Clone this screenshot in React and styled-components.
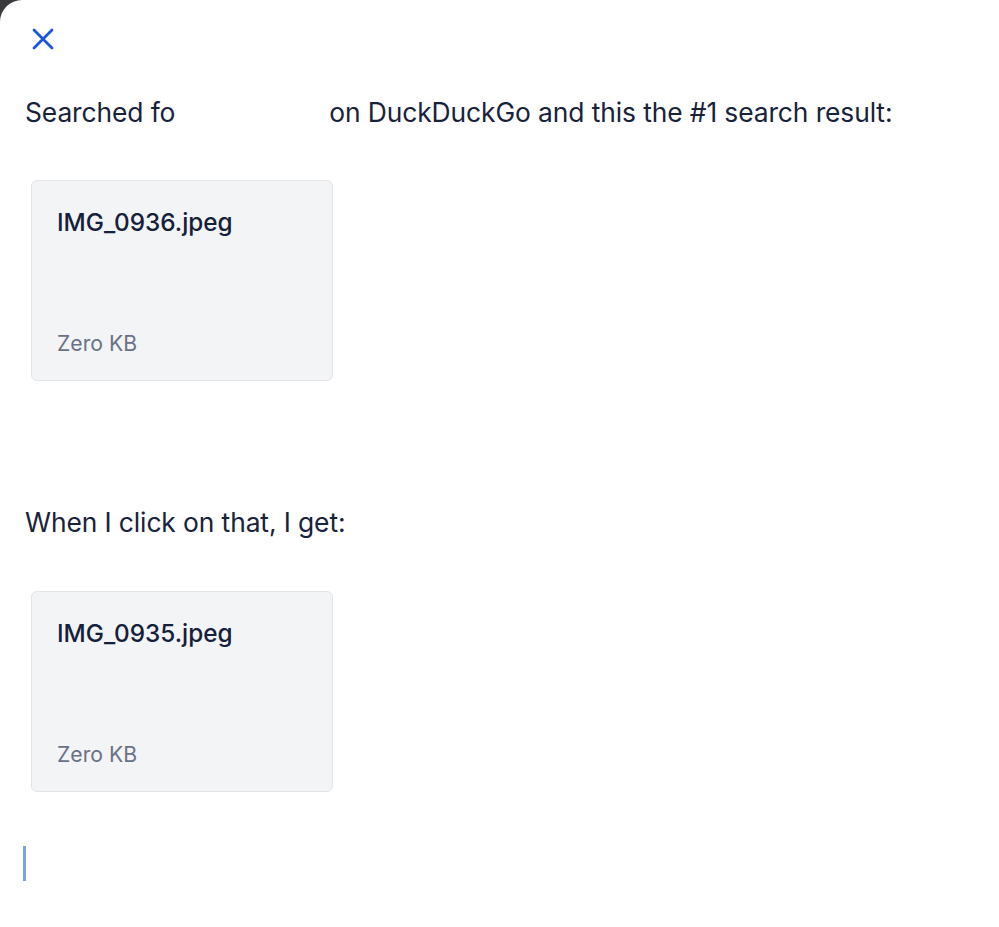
import React from 'react';
import styled, { createGlobalStyle } from 'styled-components';

const GlobalStyle = createGlobalStyle`
  html, body {
    margin: 0;
    padding: 0;
    background: #3a3a3c;
  }
  body {
    font-family: Inter, "Noto Sans", sans-serif;
    -webkit-font-smoothing: antialiased;
  }
`;

const Sheet = styled.div`
  background: #ffffff;
  border-top-left-radius: 22px;
  min-height: 927px;
  box-sizing: border-box;
  padding: 26px 25px 0 25px;
  display: flex;
  flex-direction: column;
  align-items: flex-start;
`;

const CloseButton = styled.button`
  border: none;
  background: none;
  padding: 0;
  margin: 0 0 0 6px;
  width: 24px;
  height: 26px;
  display: flex;
  align-items: center;
  justify-content: center;
  color: #1a56db;
  cursor: pointer;
`;

const Paragraph = styled.p`
  margin: ${p => p.$top}px 0 0 0;
  font-size: 26.4px;
  line-height: 34px;
  color: #18223a;
  letter-spacing: -0.1px;
  white-space: nowrap;
`;

const Redacted = styled.span`
  display: inline-block;
  width: ${p => p.$w}px;
`;

const FileCard = styled.div`
  margin: ${p => p.$top}px 0 0 6px;
  width: 302px;
  height: 201px;
  box-sizing: border-box;
  background: #f3f4f6;
  border: 1px solid #e2e4e8;
  border-radius: 6px;
  padding: 25px 25px 24px 25px;
  display: flex;
  flex-direction: column;
  justify-content: space-between;
`;

const FileName = styled.div`
  font-size: 24.3px;
  font-weight: 500;
  line-height: 32px;
  color: #15203a;
`;

const FileSize = styled.div`
  font-size: 21.2px;
  line-height: 26px;
  color: #687186;
`;

const Caret = styled.div`
  margin: 54px 0 0 -2px;
  width: 2.5px;
  height: 35px;
  background: #7ea2dc;
`;

function CloseIcon() {
  return (
    <svg width="22" height="22" viewBox="0 0 22 22" fill="none">
      <path d="M2 2L20 20M20 2L2 20" stroke="currentColor" strokeWidth="2.8" strokeLinecap="round" />
    </svg>
  );
}

function Attachment({ name, size, top }) {
  return (
    <FileCard $top={top}>
      <FileName>{name}</FileName>
      <FileSize>{size}</FileSize>
    </FileCard>
  );
}

export default function App() {
  return (
    <>
      <GlobalStyle />
      <Sheet>
        <CloseButton aria-label="Close">
          <CloseIcon />
        </CloseButton>
        <Paragraph $top={43}>
          Searched fo<Redacted $w={154} />on DuckDuckGo and this the #1 search result:
        </Paragraph>
        <Attachment name="IMG_0936.jpeg" size="Zero KB" top={51} />
        <Paragraph $top={124}>When I click on that, I get:</Paragraph>
        <Attachment name="IMG_0935.jpeg" size="Zero KB" top={52} />
        <Caret />
      </Sheet>
    </>
  );
}
